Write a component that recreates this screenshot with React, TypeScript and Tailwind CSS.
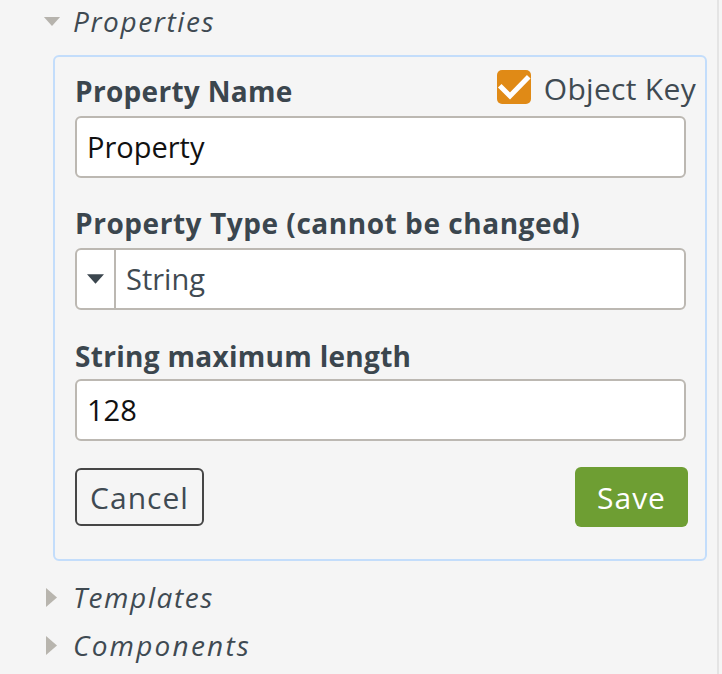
import React from "react";

const font = { fontFamily: "'Open Sans', Lato, sans-serif" };

function DownTri({ className }: { className?: string }) {
  return (
    <svg width="18" height="10" viewBox="0 0 18 10" className={className}>
      <path d="M0 0 L18 0 L9 10 Z" fill="currentColor" />
    </svg>
  );
}

function RightTri() {
  return (
    <svg width="11" height="19" viewBox="0 0 11 19" className="text-[#b8b5ae]">
      <path d="M0 0 L11 9.5 L0 19 Z" fill="currentColor" />
    </svg>
  );
}

export default function App() {
  return (
    <div
      className="w-[722px] h-[674px] bg-[#f5f5f5] flex overflow-hidden"
      style={font}
    >
      <div className="w-[717px] shrink-0 flex flex-col">
        {/* Properties header */}
        <div className="flex items-center h-[42px] pl-[43px]">
          <DownTri className="text-[#b6b3ad] w-[18px] h-[9px]" />
          <span className="ml-[12px] text-[28px] italic tracking-[1.6px] text-[#3f4a52] leading-[32px]">
            Properties
          </span>
        </div>

        {/* Panel */}
        <div className="ml-[53px] mt-[13px] w-[654px] h-[506px] border-2 border-[#c3ddfb] rounded-[6px] pt-[18px] pl-[20px] pr-[19px] flex flex-col relative">
          <div className="flex items-start justify-between">
            <label className="text-[28px] leading-[32px] font-bold tracking-[0.3px] text-[#3b464e]">
              Property Name
            </label>
            <div className="flex items-center gap-[13px] mr-[-10px] mt-[-7px]">
              <div className="w-[34px] h-[34px] rounded-[5px] bg-[#e08a16] flex items-center justify-center">
                <svg width="34" height="34" viewBox="0 0 34 34">
                  <path
                    d="M4.5 17.5 L13 26 L30 8.5"
                    fill="none"
                    stroke="#fff"
                    strokeWidth="5"
                    strokeLinecap="square"
                  />
                </svg>
              </div>
              <span className="mt-[5px] text-[30px] leading-[32px] tracking-[0.3px] text-[#3f4a52]">
                Object Key
              </span>
            </div>
          </div>
          <div className="mt-[9px] h-[62px] rounded-[6px] border-2 border-[#bcb8b2] bg-white flex items-center px-[10px]">
            <span className="text-[29px] text-[#111]">Property</span>
          </div>

          <label className="mt-[29px] text-[28px] leading-[32px] font-bold tracking-[0.55px] text-[#3b464e]">
            Property Type (cannot be changed)
          </label>
          <div className="mt-[9px] h-[62px] rounded-[6px] border-2 border-[#bcb8b2] bg-white flex">
            <div className="w-[39px] border-r-2 border-[#bcb8b2] flex items-center justify-center">
              <DownTri className="text-[#3b464e] w-[17px] h-[10px]" />
            </div>
            <div className="flex items-center pl-[10px]">
              <span className="text-[29px] text-[#3f4a52]">String</span>
            </div>
          </div>

          <label className="mt-[30px] text-[28px] leading-[32px] font-bold tracking-[0.3px] text-[#3b464e]">
            String maximum length
          </label>
          <div className="mt-[7px] h-[62px] rounded-[6px] border-2 border-[#bcb8b2] bg-white flex items-center px-[10px]">
            <span className="text-[29px] text-[#111]">128</span>
          </div>

          <div className="mt-[26px] flex items-start justify-between">
            <button className="mt-[1px] w-[129px] h-[58px] rounded-[6px] border-2 border-[#464646] text-[30px] tracking-[1px] text-[#3f4a52]">
              Cancel
            </button>
            <button className="mr-[-2px] w-[113px] h-[60px] rounded-[6px] bg-[#6e9e33] text-[30px] tracking-[1px] text-white">
              Save
            </button>
          </div>
        </div>

        {/* Templates */}
        <div className="flex items-center h-[32px] pl-[46px] mt-[20px]">
          <RightTri />
          <span className="ml-[16px] text-[28px] italic tracking-[1.6px] text-[#3f4a52] leading-[32px]">
            Templates
          </span>
        </div>
        <div className="flex items-center h-[32px] pl-[46px] mt-[16px]">
          <RightTri />
          <span className="ml-[16px] text-[28px] italic tracking-[2.2px] text-[#3f4a52] leading-[32px]">
            Components
          </span>
        </div>
      </div>
      <div className="w-[2px] shrink-0 bg-[#e4e4e4]" />
      <div className="flex-1 bg-[#f5f5f5]" />
    </div>
  );
}
